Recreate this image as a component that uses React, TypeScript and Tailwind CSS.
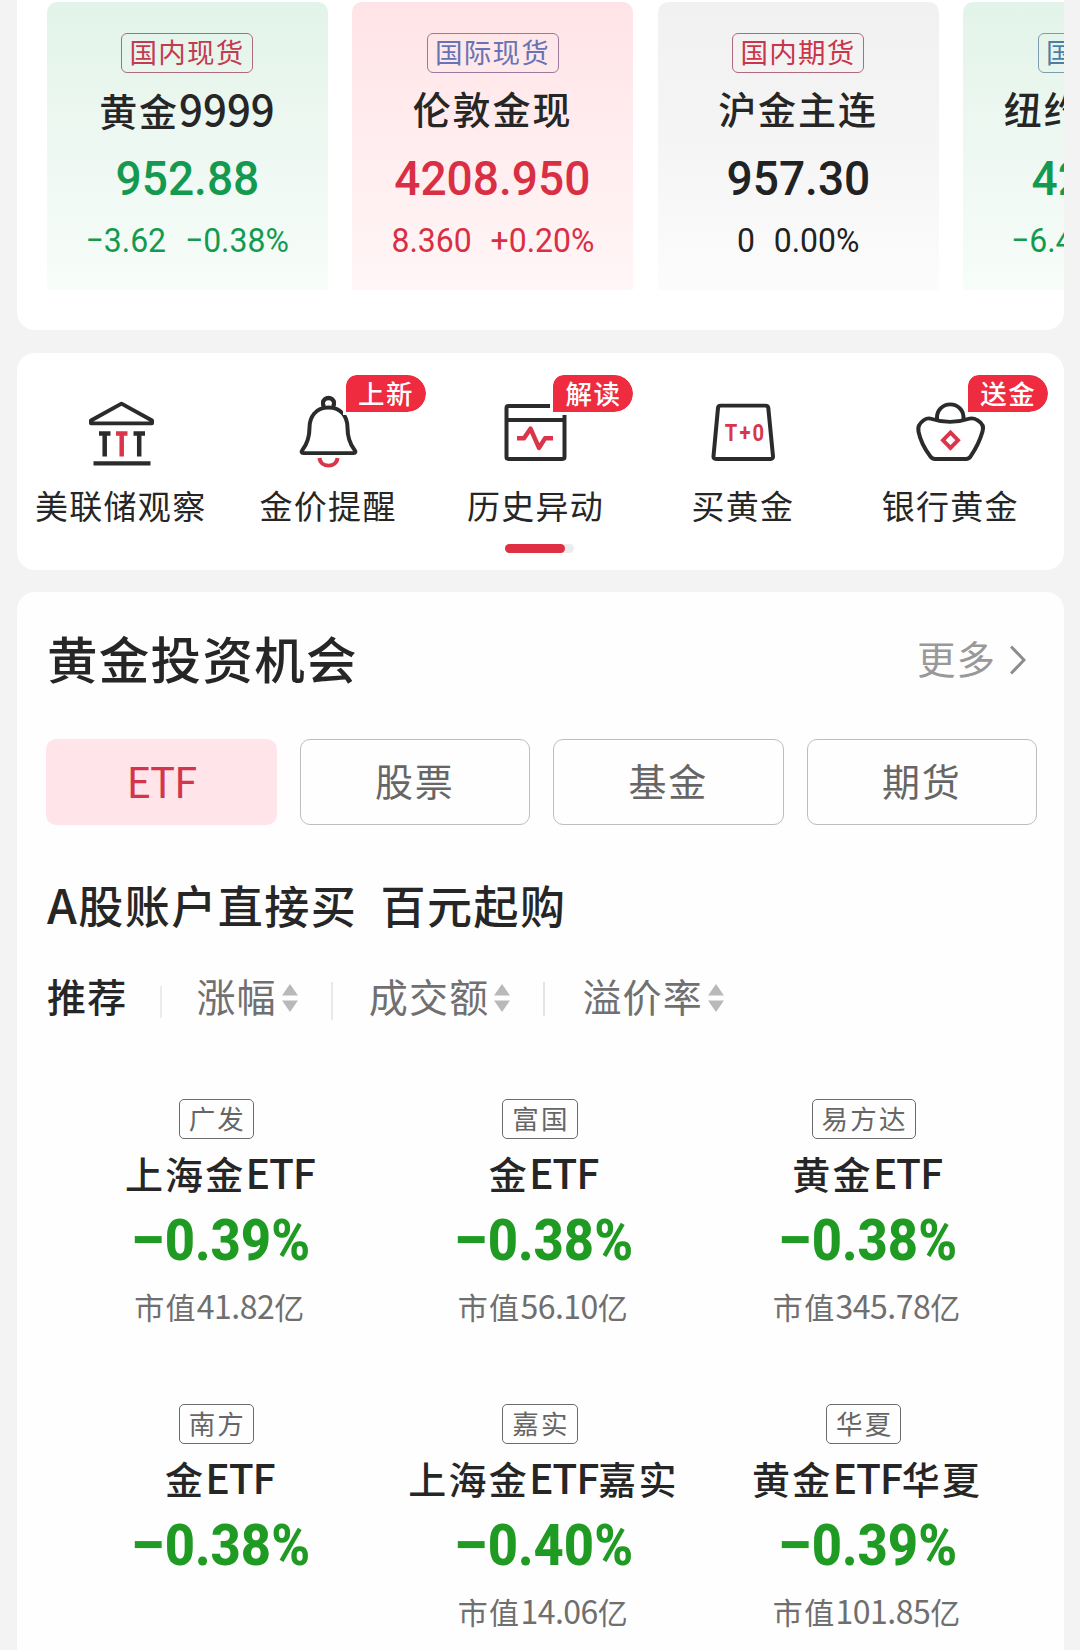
import React from "react";

const quotes = [
  { tag: "国内现货", tagStyle: "text-[#c43a50] border-[#b06a80]", name: "黄金9999", price: "952.88", change: "−3.62", pct: "−0.38%", tone: "text-[#149a50]", card: "bg-linear-to-b from-[#e2f4e9] via-[#eef8f2] to-[#f7fdf9]" },
  { tag: "国际现货", tagStyle: "text-[#6673b4] border-[#9a7a9c]", name: "伦敦金现", price: "4208.950", change: "8.360", pct: "+0.20%", tone: "text-[#d92f45]", card: "bg-linear-to-b from-[#ffe4e7] via-[#ffedef] to-[#fff6f7]" },
  { tag: "国内期货", tagStyle: "text-[#cb3549] border-[#b06a80]", name: "沪金主连", price: "957.30", change: "0", pct: "0.00%", tone: "text-[#222]", card: "bg-linear-to-b from-[#f1f1f2] via-[#f5f5f6] to-[#fcfcfc]" },
  { tag: "国际期货", tagStyle: "text-[#4d7fa6] border-[#7f9cae]", name: "纽约金主连", price: "4236.5", change: "−6.4", pct: "−0.15%", tone: "text-[#149a50]", card: "bg-linear-to-b from-[#e2f4e9] via-[#eef8f2] to-[#f7fdf9]" },
];

const funds = [
  { tag: "广发", name: "上海金ETF", pct: "−0.39%", cap: "市值41.82亿" },
  { tag: "富国", name: "金ETF", pct: "−0.38%", cap: "市值56.10亿" },
  { tag: "易方达", name: "黄金ETF", pct: "−0.38%", cap: "市值345.78亿" },
  { tag: "南方", name: "金ETF", pct: "−0.38%", cap: "" },
  { tag: "嘉实", name: "上海金ETF嘉实", pct: "−0.40%", cap: "市值14.06亿" },
  { tag: "华夏", name: "黄金ETF华夏", pct: "−0.39%", cap: "市值101.85亿" },
];

const svgProps = {
  width: 80,
  height: 77,
  viewBox: "0 0 80 80",
  preserveAspectRatio: "none",
  fill: "none",
  stroke: "#2b2b2b",
  strokeWidth: 4,
  strokeLinejoin: "round" as const,
};

function BankIcon() {
  return (
    <svg {...svgProps}>
      <path d="M40.500 10 L71 27.500 V30.500 H10 V27.500 Z" />
      <path d="M12.500 72 H69.500" strokeWidth="4.500" />
      <path d="M18 41 H29.500 M23.700 41 V65 M52.500 41 H64 M58.200 41 V65" strokeWidth="4.500" />
      <path d="M35 41 H46.500 M40.700 41 V65" stroke="#d9364c" strokeWidth="4.500" />
    </svg>
  );
}

function BellIcon() {
  return (
    <svg {...svgProps}>
      <circle cx="40.500" cy="10" r="5.500" />
      <path d="M40.500 14 C27.500 14 21.500 24 21.500 35 C21.500 45 19 52 14.500 58 C13 60 13.500 61.500 15.500 61.500 H65.500 C67.500 61.500 68 60 66.500 58 C62 52 59.500 45 59.500 35 C59.500 24 53.500 14 40.500 14 Z" fill="#fff" />
      <path d="M36 12.500 A5.500 5.500 0 1 1 45 12.500" />
      <path d="M31.500 66.500 C32.500 77 48.500 77 49.500 66.500" stroke="#d9364c" strokeLinejoin="miter" />
    </svg>
  );
}

function PulseIcon() {
  return (
    <svg {...svgProps}>
      <rect x="11.500" y="12.500" width="58" height="55" rx="2" />
      <path d="M11.500 27 H69.500" />
      <path d="M22 46 H29 L35.500 36 L44 56 L50 46 H58" stroke="#d9364c" strokeWidth="4.500" />
    </svg>
  );
}

function WeightIcon() {
  return (
    <svg {...svgProps}>
      <path d="M17.500 12 H62.500 Q65 12 65.300 14.500 L70 64.500 Q70.200 67.500 67.500 67.500 H13 Q10.300 67.500 10.500 64.500 L15 14.500 Q15.300 12 17.500 12 Z" />
      <text transform="translate(42.500 48.500) scale(0.840 1)" textAnchor="middle" fill="#d9364c" stroke="none" fontSize="24" fontWeight="700" letterSpacing="2.500" fontFamily="Roboto, sans-serif">T+0</text>
    </svg>
  );
}

function BasketIcon() {
  return (
    <svg {...svgProps}>
      <path d="M27 27 V24 A13.200 13.200 0 0 1 53.500 24 V27" />
      <path d="M14 27 Q17 25 20 25.500 Q40 32.500 60 25.500 Q64 25 67 27 Q75 32 72.500 39 Q69 52 60.500 65 Q59 67.500 56 67.500 H25 Q22 67.500 20.500 65 Q11 52 8.500 39 Q7 32 14 27 Z" />
      <path d="M40.500 40 L48 48 L40.500 56 L33 48 Z" stroke="#d9364c" strokeLinejoin="miter" />
    </svg>
  );
}

const tools = [
  { label: "美联储观察", Icon: BankIcon, badge: "" },
  { label: "金价提醒", Icon: BellIcon, badge: "上新" },
  { label: "历史异动", Icon: PulseIcon, badge: "解读" },
  { label: "买黄金", Icon: WeightIcon, badge: "" },
  { label: "银行黄金", Icon: BasketIcon, badge: "送金" },
];

function SortArrows() {
  return (
    <svg className="mt-[5px]" width="16" height="28" viewBox="0 0 16 28" fill="#b9b9b9">
      <path d="M8 0 L16 11.500 H0 Z" />
      <path d="M0 16.500 H16 L8 28 Z" />
    </svg>
  );
}

function Filter({ label }: { label: string }) {
  return (
    <div className="flex items-center gap-[5px]">
      <span>{label}</span>
      <SortArrows />
    </div>
  );
}

/* Renders Chinese and Latin runs with their own size and tracking. */
function Mixed({ text, cjk, latin }: { text: string; cjk: string; latin: string }) {
  return (
    <>
      {text.split(/([A-Z0-9.]+)/).filter(Boolean).map((part, i) => (
        <span key={i} className={/^[A-Z0-9.]/.test(part) ? latin : cjk}>{part}</span>
      ))}
    </>
  );
}

export default function App() {
  return (
    <div className="flex h-[1650px] w-[1080px] flex-col overflow-hidden whitespace-nowrap bg-[#f3f3f3] pl-[17px] pr-[16px] font-['Noto_Sans_CJK_SC',sans-serif] text-[#262626]">
      <section className="h-[330px] shrink-0 overflow-hidden rounded-b-[18px] bg-white pl-[29.500px] pt-[2px]">
        <div className="flex gap-[24.500px]">
          {quotes.map((q) => (
            <div key={q.tag} className={`flex h-[288px] w-[281px] shrink-0 flex-col items-center rounded-t-[10px] pt-[31px] ${q.card}`}>
              <div className={`flex h-[40px] w-[132px] items-center justify-center rounded-[6px] border pb-[3px] text-[27.500px] tracking-[1.200px] ${q.tagStyle}`}>{q.tag}</div>
              <div className="mt-[10px] h-[50px] text-[38px] font-medium leading-[50px]">
                <Mixed text={q.name} cjk="tracking-[1.900px]" latin="text-[42px] tracking-[0px]" />
              </div>
              <div className={`mt-[14px] h-[60px] scale-x-[0.940] font-[Roboto] text-[49px] font-medium leading-[64px] ${q.tone}`}>{q.price}</div>
              <div className={`mt-[12px] flex h-[40px] scale-x-[0.940] gap-[20px] font-[Roboto] text-[34px] leading-[43px] ${q.tone}`}>
                <span>{q.change}</span>
                <span>{q.pct}</span>
              </div>
            </div>
          ))}
        </div>
      </section>

      <section className="mt-[23px] flex h-[217px] shrink-0 flex-col items-center rounded-[18px] bg-white pr-[10px]">
        <div className="grid w-full grid-cols-5">
          {tools.map(({ label, Icon, badge }) => (
            <div key={label} className="relative flex flex-col items-center pt-[41px]">
              <Icon />
              {badge && (
                <div className="absolute left-[calc(50%+15px)] top-[19px] flex h-[43px] w-[86px] items-center justify-center rounded-[22px] rounded-bl-none rounded-tl-[14px] border-[3px] border-white bg-[#ee2b3f] bg-clip-padding pb-[2px] text-[26.500px] font-medium tracking-[1.500px] text-white">
                  {badge}
                </div>
              )}
              <div className="mt-[11px] h-[46px] text-[33px] leading-[46px] tracking-[1.300px]">{label}</div>
            </div>
          ))}
        </div>
        <div className="ml-[8px] mt-[16px] h-[9px] w-[69px] rounded-full bg-[#ececec]">
          <div className="h-full w-[60px] rounded-full bg-[#e02f42]" />
        </div>
      </section>

      <section className="mt-[22px] h-[1058px] shrink-0 rounded-t-[18px] bg-[#fefefe] px-[29px]">
        <div className="flex h-[132px] items-center justify-between pb-[1px] pl-[1px] pr-[9px]">
          <h1 className="text-[50.500px] font-medium tracking-[1.300px]">黄金投资机会</h1>
          <div className="flex items-center gap-[14px] text-[#999]">
            <span className="text-[38.500px] tracking-[1px]">更多</span>
            <svg className="mt-[5px]" width="16" height="30" viewBox="0 0 16 30" fill="none" stroke="#8c8c8c" strokeWidth="3">
              <path d="M1 1.500 L14 15 L1 28.500" />
            </svg>
          </div>
        </div>

        <div className="mt-[15px] grid h-[86px] w-[991px] grid-cols-4 gap-[23px] text-[38px] tracking-[1.700px] text-[#666]">
          <div className="flex items-center justify-center rounded-[10px] bg-[#ffe5e9] pb-[6px] text-[42px] tracking-[-1.200px] text-[#d4344c]">ETF</div>
          {["股票", "基金", "期货"].map((t) => (
            <div key={t} className="flex items-center justify-center rounded-[10px] border border-[#bdbdbd] pb-[6px]">{t}</div>
          ))}
        </div>

        <h2 className="ml-[1px] mt-[45px] h-[66px] whitespace-pre text-[45px] font-medium leading-[66px] tracking-[1.500px]">
          <Mixed text={"A股账户直接买  百元起购"} cjk="" latin="text-[48px]" />
        </h2>

        <div className="mt-[29.500px] flex h-[60px] items-center pl-[1px] text-[39px] tracking-[1.200px] text-[#707070]">
          <span className="font-medium text-[#262626]">推荐</span>
          <div className="ml-[33px] mr-[34px] mt-[12px] h-[32px] w-[2px] bg-[#ebebeb]" />
          <Filter label="涨幅" />
          <div className="ml-[33px] mr-[36px] mt-[10px] h-[38px] w-[2px] bg-[#e8e8e8]" />
          <Filter label="成交额" />
          <div className="ml-[33px] mr-[37px] mt-[7px] h-[34px] w-[2px] bg-[#e4e4e4]" />
          <Filter label="溢价率" />
        </div>

        <div className="ml-[12px] mt-[73px] grid w-[971px] grid-cols-3">
          {funds.map((f) => (
            <div key={f.tag} className="flex h-[305px] flex-col items-center">
              <div className="relative right-[3.500px] flex h-[40px] items-center justify-center rounded-[5px] border-[1.500px] border-[#6b6b6b] pb-[2px] pl-[9px] pr-[7px] text-[26.500px] tracking-[2.200px] text-[#666]">{f.tag}</div>
              <div className="mt-[9px] h-[48px] text-[38px] font-medium leading-[46px]">
                <Mixed text={f.name} cjk="tracking-[2.200px]" latin="text-[41px] tracking-[-1.200px]" />
              </div>
              <div className="mt-[12.500px] flex h-[60px] scale-x-[0.905] font-[Roboto] text-[58px] font-extrabold leading-[65px] text-[#1f9a22]">
                <span className="mr-[6px] origin-left scale-x-[1.200]">{f.pct.slice(0, 1)}</span>
                <span>{f.pct.slice(1)}</span>
              </div>
              <div className="mt-[17px] h-[40px] text-[30px] leading-[40px] text-[#6f6f6f]">
                <Mixed text={f.cap} cjk="tracking-[1.300px]" latin="text-[32px] tracking-[-0.500px]" />
              </div>
            </div>
          ))}
        </div>
      </section>
    </div>
  );
}
